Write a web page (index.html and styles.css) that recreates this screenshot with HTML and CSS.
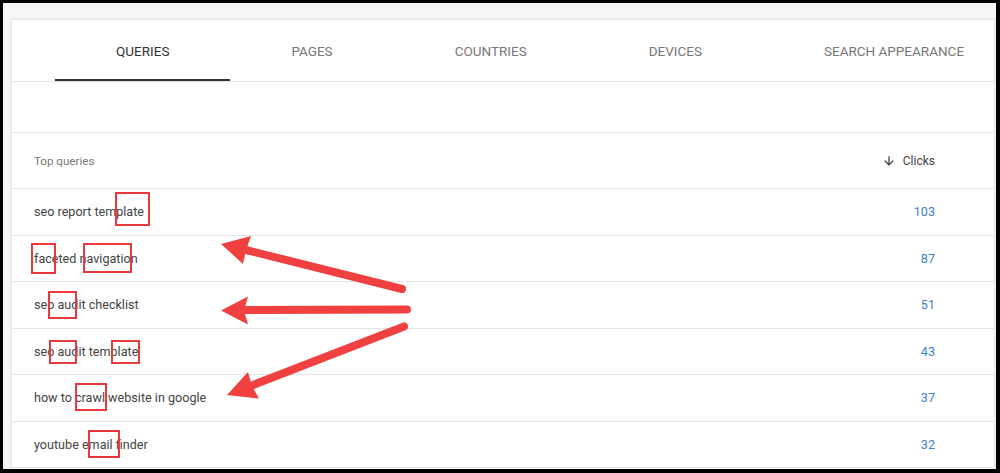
FILE: index.html
```html
<!DOCTYPE html>
<html lang="en">
<head>
    <meta charset="UTF-8">
    <title>Performance - Queries</title>
    <link rel="stylesheet" href="styles.css">
</head>
<body>

<div class="frame">
    <div class="card">
        <div class="tabs">
            <div class="tab active">QUERIES</div>
            <div class="tab">PAGES</div>
            <div class="tab">COUNTRIES</div>
            <div class="tab">DEVICES</div>
            <div class="tab">SEARCH APPEARANCE</div>
        </div>
        <div class="toolbar"></div>

        <div class="table">
            <div class="row head">
                <span class="query">Top queries</span>
                <span class="sort">
                    <svg class="sort-icon" viewBox="0 0 24 24"><path d="M20 12l-1.41-1.41L13 16.17V4h-2v12.17l-5.58-5.59L4 12l8 8 8-8z"/></svg>
                    Clicks
                </span>
            </div>
            <div class="row"><span class="query">seo report template</span><span class="clicks">103</span></div>
            <div class="row"><span class="query">faceted navigation</span><span class="clicks">87</span></div>
            <div class="row"><span class="query">seo audit checklist</span><span class="clicks">51</span></div>
            <div class="row"><span class="query">seo audit template</span><span class="clicks">43</span></div>
            <div class="row"><span class="query">how to crawl website in google</span><span class="clicks">37</span></div>
            <div class="row"><span class="query">youtube email finder</span><span class="clicks">32</span></div>
        </div>
    </div>
</div>

<!-- annotations drawn on top of the screenshot -->
<svg class="marks" viewBox="0 0 1000 473" width="1000" height="473">
    <g class="box">
        <rect x="116" y="193" width="33" height="32"/>
        <rect x="32" y="244" width="23" height="29"/>
        <rect x="84" y="244" width="47" height="28"/>
        <rect x="49" y="292" width="27" height="26"/>
        <rect x="50" y="341" width="26" height="22"/>
        <rect x="112" y="341" width="27" height="22"/>
        <rect x="76" y="384" width="30" height="26"/>
        <rect x="89" y="431" width="30" height="26"/>
    </g>
    <g class="arrow">
        <line x1="402" y1="289" x2="246" y2="250"/>
        <polygon points="221,244 251,236 246,250 243,264"/>
        <line x1="407" y1="309.5" x2="246" y2="310"/>
        <polygon points="221,310.5 248,296.5 244,310.5 248,324.5"/>
        <line x1="404" y1="326.5" x2="253" y2="385"/>
        <polygon points="227,395 248,372 252,386 259,398.5"/>
    </g>
</svg>

</body>
</html>
```

FILE: styles.css
```css
html {
    background: #000;
}
body {
    margin: 0;
    position: relative;
    width: 1000px;
    height: 473px;
    overflow: hidden;
    font-family: Roboto, "Liberation Sans", Arial, sans-serif;
}
.frame {
    margin: 3px 4px 0 3px;
    height: 466px;
    padding: 16px 1px 0 8px;
    box-sizing: border-box;
    background-color: #f6f6f6;
    overflow: hidden;
}
.card {
    height: 460px;
    background: #fff;
    border: 1px solid #e6e6e6;
    border-bottom: none;
    box-shadow: 0 0 3px rgba(0, 0, 0, 0.06);
}
.tabs {
    display: flex;
    padding-left: 43px;
    border-bottom: 1px solid #e4e4e4;
}
.tab {
    flex-shrink: 0;
    white-space: nowrap;
    height: 61px;
    padding: 0 61px;
    display: flex;
    align-items: center;
    box-sizing: border-box;
    font-size: 13.5px;
    color: #777;
}
.tab.active {
    color: #333;
    border-bottom: 2px solid #333;
    padding-top: 2px;
}
.toolbar {
    height: 50px;
    border-bottom: 1px solid #e4e4e4;
}
.row {
    display: flex;
    align-items: center;
    justify-content: space-between;
    height: 45.5px;
    padding: 0 59px 0 22px;
    border-bottom: 1px solid #e4e4e4;
    font-size: 12.6px;
    color: #444;
}
.row.head {
    height: 55px;
    font-size: 11.6px;
    color: #777;
}
.sort {
    display: flex;
    align-items: center;
    gap: 7px;
    font-size: 12px;
    color: #444;
}
.sort-icon {
    width: 14px;
    height: 14px;
    fill: #333;
}
.clicks {
    color: #3f7fc6;
}
.marks {
    position: absolute;
    top: 0;
    left: 0;
    pointer-events: none;
}
.box rect {
    fill: none;
    stroke: #e8393c;
    stroke-width: 2;
}
.arrow line {
    stroke: #f04040;
    stroke-width: 8;
    stroke-linecap: round;
}
.arrow polygon {
    fill: #f04040;
}
```
